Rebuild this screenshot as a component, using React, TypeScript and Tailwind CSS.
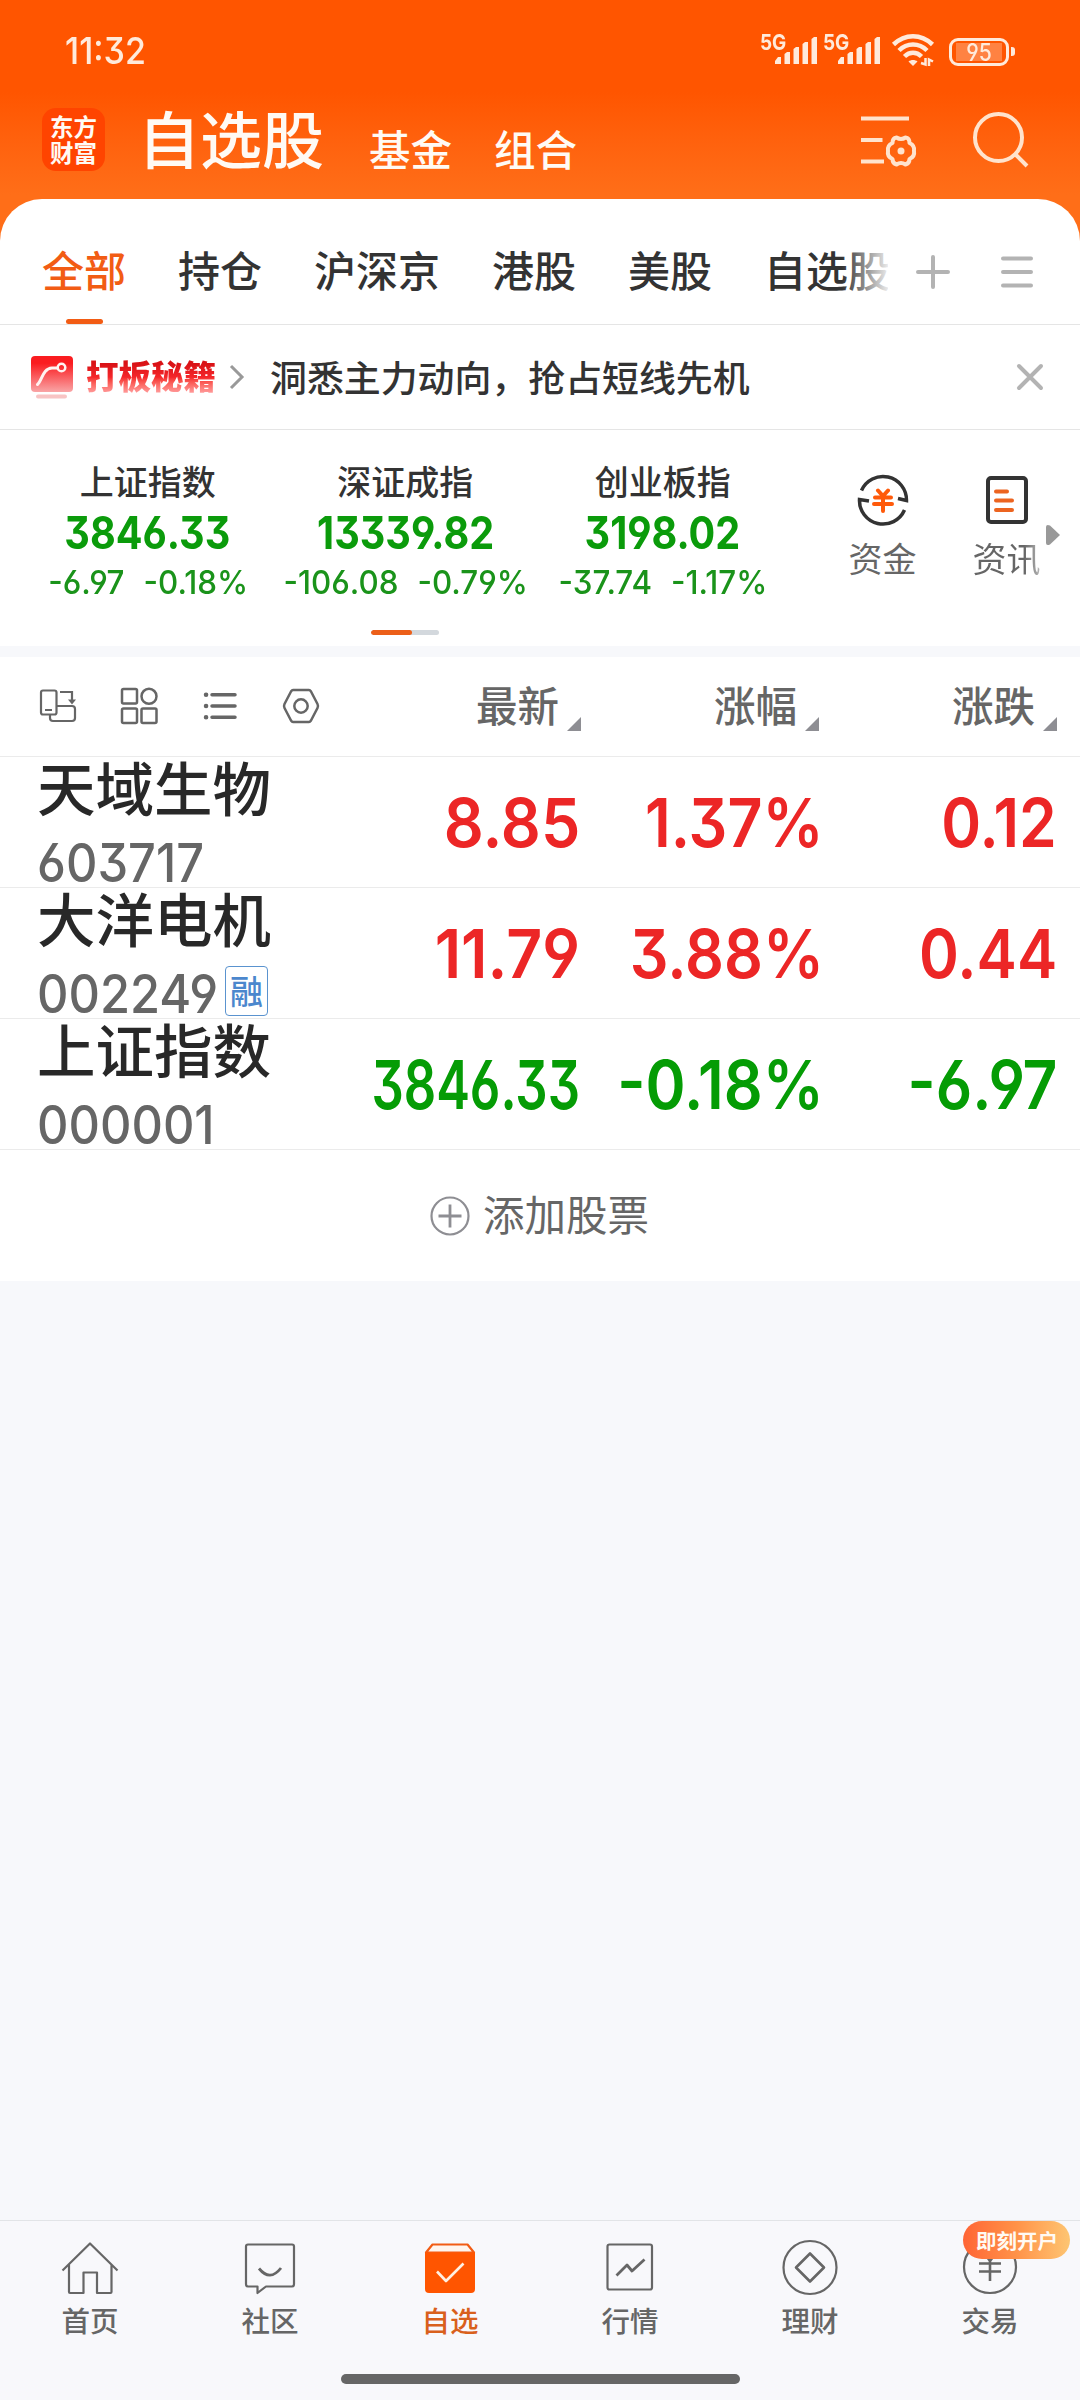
import type { ReactNode } from 'react';
import clsx from 'clsx';

const NUM = "font-['Inter','Noto_Sans_CJK_SC',sans-serif] [font-feature-settings:'cv03','cv04','cv09']";

const tabs = ['全部', '持仓', '沪深京', '港股', '美股', '自选股'];

const indices = [
  { name: '上证指数', value: '3846.33', change: '-6.97', percent: '-0.18%' },
  { name: '深证成指', value: '13339.82', change: '-106.08', percent: '-0.79%' },
  { name: '创业板指', value: '3198.02', change: '-37.74', percent: '-1.17%' },
];

const stocks = [
  { name: '天域生物', code: '603717', price: '8.85', percent: '1.37%', change: '0.12', up: true },
  { name: '大洋电机', code: '002249', price: '11.79', percent: '3.88%', change: '0.44', up: true, margin: true },
  { name: '上证指数', code: '000001', price: '3846.33', percent: '-0.18%', change: '-6.97', up: false, narrow: true },
];

function Signal() {
  return (
    <div className={clsx(NUM, 'relative w-[63px] h-[34px]')}>
      <span className="absolute left-0 top-0 text-[22px] leading-[20px] font-bold origin-left scale-x-[0.86]">5G</span>
      <svg className="absolute left-[15px] top-[5px]" width="44" height="28" viewBox="0 0 44 28" fill="currentColor">
        <path d="M0 27V24L3 20H6V27ZM9.500 27V17L12 15H15V27ZM18.500 27V12L21 10H24V27ZM27.500 27V7L30 5H33V27ZM36.500 27V2L39 0H42V27Z" />
      </svg>
    </div>
  );
}

function StatusBar() {
  return (
    <div className="flex h-[100px] items-start text-[#ffeadb]">
      <div className={clsx(NUM, 'ml-[65px] mt-[31px] text-[37px] leading-[40px] font-medium origin-left scale-x-[0.92]')}>11:32</div>
      <div className="ml-auto mr-[65px] mt-[32px] flex">
        <Signal />
        <Signal />
        <svg className="ml-[5px] mt-[2px]" width="46" height="34" viewBox="0 0 46 34" fill="none" stroke="currentColor">
          <path d="M2.500 10.500C14-0.500 30-0.500 41.500 10.500" strokeWidth="4.500" />
          <path d="M8 16.500C16 8.500 28 8.500 36 16.500" strokeWidth="4.500" />
          <path d="M13.500 22.500C18.500 17.500 25.500 17.500 30.500 22.500" strokeWidth="4.500" />
          <path d="M22 32L17.500 27.500C20 25.500 24 25.500 26.500 27.500Z" fill="currentColor" stroke="none" />
          <path d="M30 29L34.500 30.500V24M38 32V25.500L42 27.500" strokeWidth="2.500" />
        </svg>
        <div className="ml-[12px] mt-[3px] flex items-center">
          <div className="flex h-[28px] w-[60px] items-center rounded-[9px] border-[3px] border-current px-[4px]">
            <div className="h-[18px] w-[46px] bg-[#ff8242]">
              <div className={clsx(NUM, 'scale-x-[0.88] text-center text-[24px] leading-[19px] font-medium')}>95</div>
            </div>
          </div>
          <div className="ml-[2px] h-[9px] w-[4px] rounded-r-[3px] bg-current" />
        </div>
      </div>
    </div>
  );
}

function Header() {
  return (
    <div className="flex h-[99px] text-[#fffaf4]">
      <div className="ml-[42px] mt-[8px] h-[63px] w-[63px] rounded-[14px] bg-[#ff4400] pt-[5px] text-center text-[23.500px] leading-[26px] font-bold">
        <div>东方</div>
        <div>财富</div>
      </div>
      <div className="ml-[33px] mt-[2px] w-[231px] text-[62px] leading-[70px] font-medium">自选股</div>
      <div className="mt-[23px] flex gap-[42px] text-[41.500px] leading-[50px] font-medium">
        <span>基金</span>
        <span>组合</span>
      </div>
      <div className="ml-auto mr-[49px] mt-[12px] flex text-[#ffe3cd]">
        <svg width="60" height="60" viewBox="0 0 60 60" fill="none" stroke="currentColor" strokeWidth="4">
          <path d="M1 6.500H49M1 28H22.500M1 49.500H24" />
          <path
            d="M36.500 25.500Q41 28.500 45.500 25.500Q49.500 26 49.500 31Q55 33.500 54 39Q55 44.500 49.500 47Q49.500 51.500 45.500 52.500Q41 49.500 36.500 52.500Q32.500 51.500 32.500 47Q27 44.500 28 39Q27 33.500 32.500 31Q32.500 26 36.500 25.500Z"
            strokeLinejoin="round"
          />
          <circle cx="41" cy="39" r="3.500" fill="currentColor" stroke="none" />
        </svg>
        <svg className="ml-[51px]" width="60" height="60" viewBox="0 0 60 60" fill="none" stroke="currentColor" strokeWidth="4">
          <circle cx="27.500" cy="25.500" r="23.500" />
          <path d="M44 42L56 54" />
        </svg>
      </div>
    </div>
  );
}

function TabBar() {
  return (
    <div className="flex h-[126px] items-center border-b border-[#e5e5e5] pr-[44px]">
      <div className="relative flex h-full w-[888px] items-center gap-[52px] overflow-hidden pl-[42px] text-[42px] font-medium whitespace-nowrap text-[#333]">
        {tabs.map((tab, i) => (
          <div key={tab} className={clsx('relative flex h-full items-center pt-[15px]', i === 0 && 'text-[#f25c14]')}>
            <span className="pb-[1px]">{tab}</span>
            {i === 0 && <div className="absolute bottom-0 left-[24px] h-[5px] w-[37px] rounded-full bg-[#f25c14]" />}
          </div>
        ))}
        <div className="absolute top-0 right-0 h-full w-[46px] bg-linear-to-r from-white/0 to-white/90" />
      </div>
      <svg className="ml-[26px] mt-[20px]" width="38" height="38" viewBox="0 0 38 38" stroke="#b3b3b3" strokeWidth="4" strokeLinecap="round">
        <path d="M4 19H34M19 4V34" />
      </svg>
      <svg className="ml-auto mt-[20px]" width="38" height="38" viewBox="0 0 38 38" stroke="#b3b3b3" strokeWidth="4" strokeLinecap="round">
        <path d="M5 5.500H33M5 19H33M5 32.500H33" />
      </svg>
    </div>
  );
}

function PromoBanner() {
  return (
    <div className="flex h-[105px] items-center border-b border-[#e5e5e5]">
      <svg className="ml-[31px]" width="42" height="43" viewBox="0 0 42 43" fill="none">
        <defs>
          <linearGradient id="promo" x1="0" y1="0" x2="0" y2="1">
            <stop offset="0.200" stopColor="#fa1c20" />
            <stop offset="1" stopColor="#f9a5a6" />
          </linearGradient>
        </defs>
        <rect width="42" height="36" rx="4" fill="url(#promo)" />
        <path d="M6.500 28.500C11 25 11.500 12.500 21 12H26.500" stroke="#fff3f1" strokeWidth="3" strokeLinecap="round" />
        <circle cx="30.500" cy="11.500" r="3.800" stroke="#fff3f1" strokeWidth="2.500" />
        <rect x="5" y="38.500" width="31" height="4" rx="2" fill="#f8c4c4" />
      </svg>
      <div className="ml-[13px] mb-[5px] bg-linear-to-b from-[#d91216] from-25% via-[#f5262a] via-55% to-[#f99] to-90% bg-clip-text text-[32.500px] leading-[44px] font-black text-transparent">打板秘籍</div>
      <svg className="ml-[13px]" width="16" height="26" viewBox="0 0 16 26" fill="none" stroke="#999" strokeWidth="3">
        <path d="M2 2L13 13L2 24" />
      </svg>
      <div className="ml-[25px] mb-[2px] text-[36.900px] leading-[50px] font-medium text-[#333]">洞悉主力动向，抢占短线先机</div>
      <svg className="ml-auto mr-[35px]" width="30" height="30" viewBox="0 0 30 30" stroke="#b3b3b3" strokeWidth="4" strokeLinecap="round">
        <path d="M4 4L26 26M26 4L4 26" />
      </svg>
    </div>
  );
}

function IndexPanel() {
  return (
    <div className="relative flex h-[216px] pl-[19px]">
      {indices.map((item) => (
        <div key={item.name} className="flex w-[257.500px] flex-col items-center pt-[27px] whitespace-nowrap">
          <div className="text-[34px] leading-[48px] font-medium text-[#333]">{item.name}</div>
          <div className={clsx(NUM, 'mt-[1px] scale-x-[0.88] text-[45px] leading-[54px] font-bold text-[#0b9b0b]')}>{item.value}</div>
          <div className={clsx(NUM, 'flex scale-x-[0.95] gap-[20px] text-[33px] leading-[44px] font-medium text-[#1a931a]')}>
            <span>{item.change}</span>
            <span>{item.percent}</span>
          </div>
        </div>
      ))}
      <div className="absolute bottom-[11px] left-[371px] h-[5px] w-[68px] overflow-hidden rounded-full bg-[#d3d8dd]">
        <div className="h-full w-[41px] rounded-full bg-[#ec5f19]" />
      </div>
      <div className="ml-[29px] flex w-[124px] flex-col items-center pt-[42px] text-[34px] text-[#666]">
        <svg width="56" height="56" viewBox="0 0 56 56" fill="none" stroke="#333" strokeWidth="3.500">
          <path d="M6.500 18.500A23.500 23.500 0 0 1 51.500 28.500L43 26.500" />
          <path d="M49.500 38A23.500 23.500 0 0 1 4.500 27.500L14 29" />
          <path d="M23 18.500L28 24L33 18.500M20 25.500H36M19 32H37M28 24V39" stroke="#ff5a0a" strokeWidth="4" strokeLinecap="round" />
        </svg>
        <span className="mt-[5px] leading-[50px]">资金</span>
      </div>
      <div className="flex w-[124px] flex-col items-center pt-[42px] text-[34px] text-[#666]">
        <svg width="56" height="56" viewBox="0 0 56 56" fill="none" stroke="#333" strokeWidth="4" strokeLinecap="round">
          <rect x="9" y="6" width="38" height="44" rx="3" />
          <path d="M17 19.500H28M17 28.500H33M17 38H33" stroke="#ec6420" />
        </svg>
        <span className="mt-[5px] bg-linear-to-r from-[#666] from-75% to-[#bbb] bg-clip-text leading-[50px] text-transparent">资讯</span>
      </div>
      <svg className="absolute right-[20px] top-[94px]" width="14" height="22" viewBox="0 0 14 22" fill="#999">
        <path d="M0 3Q0 0 4 1.500L14 11L4 20.500Q0 22 0 19Z" />
      </svg>
    </div>
  );
}

function ListHeader() {
  return (
    <div className="flex h-[100px] items-center border-b border-[#ebebeb] pr-[23px] text-[#666]">
      <div className="flex items-center gap-[41px] pb-[1px] pl-[38px]">
        <svg width="40" height="40" viewBox="0 0 40 40" fill="none" stroke="currentColor" strokeWidth="2.200">
          <rect x="3" y="4.500" width="15.500" height="24" rx="2" />
          <path d="M7 24H14M12 29V32Q12 35 15 35H34Q37 35 37 32V23Q37 20 34 20H19M22 6H34V15" />
          <path d="M30 13.500H38L34 18.500Z" fill="currentColor" stroke="none" />
        </svg>
        <svg width="40" height="40" viewBox="0 0 40 40" fill="none" stroke="currentColor" strokeWidth="2.500">
          <rect x="3" y="3" width="15" height="14.500" rx="1.500" />
          <circle cx="30" cy="10.300" r="7.500" />
          <rect x="3" y="22.500" width="15" height="14.500" rx="1.500" />
          <rect x="22.500" y="22.500" width="15" height="14.500" rx="1.500" />
        </svg>
        <svg width="40" height="40" viewBox="0 0 40 40" fill="none" stroke="currentColor" strokeWidth="3.500" strokeLinecap="round">
          <path d="M12 8.800H35M12 20H35M12 31.200H35" />
          <path d="M6 8.800H6.100M6 20H6.100M6 31.200H6.100" strokeWidth="4.500" />
        </svg>
        <svg width="40" height="40" viewBox="0 0 40 40" fill="none" stroke="currentColor" strokeWidth="2.500" strokeLinejoin="round">
          <path d="M12 4H28Q29 4 30 5.500L36.500 18Q37.500 20 36.500 22L30 34.500Q29 36 28 36H12Q11 36 10 34.500L3.500 22Q2.500 20 3.500 18L10 5.500Q11 4 12 4Z" />
          <circle cx="20" cy="20" r="6.700" />
        </svg>
      </div>
      <div className="ml-auto flex">
        {['最新', '涨幅', '涨跌'].map((label) => (
          <div key={label} className="flex w-[238px] items-center justify-end">
            <span className="mb-[6px] text-[41.500px] leading-[60px] font-medium">{label}</span>
            <svg className="ml-[8px] mt-[34px]" width="14" height="14" viewBox="0 0 14 14" fill="#8e8e93">
              <path d="M14 0V14H0Z" />
            </svg>
          </div>
        ))}
      </div>
    </div>
  );
}

function StockRow({ stock }: { stock: (typeof stocks)[number] }) {
  return (
    <div className="flex h-[131px] items-center border-b border-[#ebebeb] pr-[24px] whitespace-nowrap">
      <div className="relative h-full w-[304px] pl-[37px]">
        <div className="h-[73px] text-[58.500px] leading-[58px] font-medium text-[#282828]">{stock.name}</div>
        <div className="flex h-[56px] items-center">
          <span className={clsx(NUM, 'mt-[9px] origin-left scale-x-[0.92] text-[53px] leading-[56px] font-medium text-[#666]')}>{stock.code}</span>
          {stock.margin && (
            <span className="absolute left-[225px] mt-[3px] flex h-[50px] w-[43px] items-center justify-center rounded-[4px] border border-[#5a93cf] text-[33px] leading-none font-medium text-[#4b87cd]">融</span>
          )}
        </div>
      </div>
      <div className={clsx(NUM, 'ml-auto flex text-[68px] leading-[80px] font-semibold', stock.up ? 'text-[#ec2626]' : 'text-[#059c05]')}>
        <span className="flex w-[238px] justify-end">
          <span className={clsx('origin-right', stock.narrow ? 'scale-x-[0.745]' : 'scale-x-[0.92]')}>{stock.price}</span>
        </span>
        <span className="flex w-[238px] justify-end">
          <span className="-mr-[6px] origin-right scale-x-[0.895]">{stock.percent}</span>
        </span>
        <span className="flex w-[238px] justify-end">
          <span className="-mr-[1px] origin-right scale-x-[0.89]">{stock.change}</span>
        </span>
      </div>
    </div>
  );
}

function NavItem({ label, active, children }: { label: string; active?: boolean; children: ReactNode }) {
  return (
    <div className={clsx('relative flex w-[180px] flex-col items-center pt-[16px]', active ? 'text-[#d9601c]' : 'text-[#666]')}>
      <svg width="60" height="60" viewBox="0 0 60 60" fill="none" stroke="currentColor" strokeWidth="2.200" strokeLinejoin="round">
        {children}
      </svg>
      <span className="mt-[3px] text-[28.500px] leading-[40px] font-medium">{label}</span>
    </div>
  );
}

function BottomNav() {
  return (
    <div className="h-[180px] border-t border-[#e2e4e7] bg-[#f8f8fb]">
      <div className="relative flex h-[153px]">
        <NavItem label="首页">
          <path d="M2.500 33.500L30 6.500L57.500 33.500M9 27.500V55Q9 56 10 56H23.500V35.500H37V56H50.500Q51.500 56 51.500 55V27.500" />
        </NavItem>
        <NavItem label="社区">
          <path d="M8 7.500H52Q54 7.500 54 9.500V47Q54 49.500 52 49.500H26L17.500 56V49.500H8Q6 49.500 6 47V9.500Q6 7.500 8 7.500Z" />
          <path d="M19 31.500Q30 45 41 31" strokeWidth="2.800" />
        </NavItem>
        <NavItem label="自选" active>
          <path d="M12.500 7.500H47.500L54 15.500H6Z" fill="#fff5ee" stroke="#f25c14" />
          <path d="M5 15.500H55V52Q55 56 51 56H9Q5 56 5 52Z" fill="#ff5500" stroke="none" />
          <path d="M17 34.500L26 44L43.500 26.500" stroke="#fff0e2" strokeWidth="2.600" />
        </NavItem>
        <NavItem label="行情">
          <rect x="7.500" y="7.500" width="44.500" height="45" rx="2" />
          <path d="M16.500 38.500L27 28L32 34L44.500 22.500" strokeWidth="2.800" />
        </NavItem>
        <NavItem label="理财">
          <circle cx="30" cy="30.500" r="26.500" />
          <path d="M30 16.500L44 30.500L30 44.500L16 30.500Z" strokeWidth="2.600" />
        </NavItem>
        <NavItem label="交易">
          <circle cx="30" cy="30" r="26" />
          <path d="M22 13L30 24L38 13M19 26.500H41M19 34.500H41M30 24V44" strokeWidth="2.600" />
        </NavItem>
        <div className="absolute left-[963px] top-0 h-[38px] w-[107px] rounded-full bg-linear-to-r from-[#ff6435] via-[#ff9248] to-[#fdc572] pl-[13px] text-[20.500px] leading-[39px] font-bold text-[#fffaf3]">即刻开户</div>
      </div>
      <div className="mx-auto h-[10px] w-[399px] rounded-full bg-[#666]" />
    </div>
  );
}

export default function App() {
  return (
    <div className="flex h-[2400px] w-[1080px] flex-col bg-[#f7f8fb] font-['Noto_Sans_CJK_SC',sans-serif]">
      <div className="h-[245px] shrink-0 bg-linear-to-b from-[#ff5500] from-[92px] to-[#ff6e18] to-[195px]">
        <StatusBar />
        <Header />
      </div>
      <div className="relative -mt-[46px] shrink-0 rounded-t-[42px] bg-white">
        <TabBar />
        <PromoBanner />
        <IndexPanel />
      </div>
      <div className="mt-[11px] shrink-0 bg-white">
        <ListHeader />
        {stocks.map((stock) => (
          <StockRow key={stock.code} stock={stock} />
        ))}
        <div className="flex h-[131px] items-center justify-center pr-[1px] text-[#666]">
          <svg width="40" height="40" viewBox="0 0 40 40" fill="none" stroke="#8e8e93" strokeWidth="2.200">
            <circle cx="20" cy="20" r="18.500" />
            <path d="M8.500 20H31.500M20 8.500V31.500" strokeWidth="2.800" />
          </svg>
          <span className="ml-[13px] mb-[6px] text-[41.500px] leading-[60px]">添加股票</span>
        </div>
      </div>
      <div className="mt-auto">
        <BottomNav />
      </div>
    </div>
  );
}
